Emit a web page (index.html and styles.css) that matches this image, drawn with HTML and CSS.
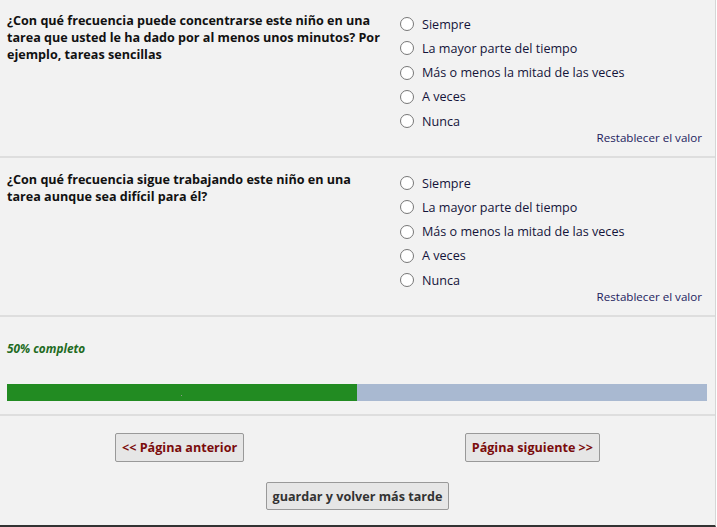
FILE: index.html
```html
<!DOCTYPE html>
<html lang="es">
<head>
  <meta charset="UTF-8" />
  <meta name="viewport" content="width=device-width, initial-scale=1.0"/>
  <title>Encuesta</title>
  <link rel="stylesheet" href="styles.css">
</head>
<body>
  <div class="page">
    <div class="question">
      <div class="q-text">¿Con qué frecuencia puede concentrarse este niño en una tarea que usted le ha dado por al menos unos minutos? Por ejemplo, tareas sencillas</div>
      <div class="q-answers">
        <label class="opt"><span class="radio"></span>Siempre</label>
        <label class="opt"><span class="radio"></span>La mayor parte del tiempo</label>
        <label class="opt"><span class="radio"></span>Más o menos la mitad de las veces</label>
        <label class="opt"><span class="radio"></span>A veces</label>
        <label class="opt"><span class="radio"></span>Nunca</label>
        <div class="reset">Restablecer el valor</div>
      </div>
    </div>

    <div class="question">
      <div class="q-text">¿Con qué frecuencia sigue trabajando este niño en una tarea aunque sea difícil para él?</div>
      <div class="q-answers">
        <label class="opt"><span class="radio"></span>Siempre</label>
        <label class="opt"><span class="radio"></span>La mayor parte del tiempo</label>
        <label class="opt"><span class="radio"></span>Más o menos la mitad de las veces</label>
        <label class="opt"><span class="radio"></span>A veces</label>
        <label class="opt"><span class="radio"></span>Nunca</label>
        <div class="reset">Restablecer el valor</div>
      </div>
    </div>

    <div class="progress">
      <div class="progress-label">50% completo</div>
      <div class="bar">
        <div class="bar-fill" style="width: 50%"><span class="dot"></span></div>
      </div>
    </div>

    <div class="nav">
      <div class="nav-row">
        <button class="btn btn-nav">&lt;&lt; Página anterior</button>
        <button class="btn btn-nav">Página siguiente &gt;&gt;</button>
      </div>
      <div class="nav-save">
        <button class="btn btn-save">guardar y volver más tarde</button>
      </div>
    </div>
  </div>
</body>
</html>
```

FILE: styles.css
```css
body {
  margin: 0;
  background: #fff;
  font-family: "Open Sans", "Noto Sans", sans-serif;
  font-size: 12.6px;
  color: #111;
}
.page {
  width: 715px;
  height: 526px;
  margin-top: -1px;
  background: #f2f2f2;
  border-right: 1px solid #d6d6d6;
  border-bottom: 2px solid #333;
  overflow: hidden;
}
.question {
  display: flex;
  padding: 13px 0 0 7px;
  height: 144px;
  border-bottom: 2px solid #dedede;
}
.q-text {
  width: 376px;
  font-weight: bold;
  line-height: 17px;
  color: #111;
}
.q-answers {
  flex: 1;
  padding: 2px 13px 0 17px;
}
.opt {
  display: flex;
  align-items: center;
  height: 20px;
  margin-bottom: 4.25px;
  color: #14143a;
}
.radio {
  width: 12px;
  height: 12px;
  border: 1px solid #777;
  border-radius: 50%;
  background: #fff;
  margin-right: 8px;
}
.reset {
  margin-top: -3px;
  text-align: right;
  font-size: 11.6px;
  line-height: 12px;
  color: #22225e;
}
.progress {
  padding: 23px 8px 0 7px;
  height: 74px;
  border-bottom: 2px solid #dedede;
}
.progress-label {
  font-style: italic;
  font-weight: bold;
  font-size: 11.8px;
  color: #226b22;
  line-height: 16px;
}
.bar {
  margin-top: 28px;
  height: 17px;
  background: #a9b9d1;
}
.bar-fill {
  position: relative;
  height: 100%;
  background: #228b22;
}
.dot {
  position: absolute;
  left: 174px;
  top: 11px;
  width: 1px;
  height: 1px;
  background: #8a9a8a;
}
.nav {
  padding-top: 17px;
}
.nav-row {
  display: flex;
  justify-content: space-between;
  padding: 0 115px;
}
.nav-save {
  display: flex;
  justify-content: center;
  margin-top: 20px;
}
.btn {
  font-family: "Open Sans", "Noto Sans", sans-serif;
  font-size: 12.6px;
  font-weight: bold;
  background: #e6e6e6;
  border: 1px solid #999;
  border-radius: 2px;
  height: 29px;
  padding: 0 6px;
  cursor: pointer;
}
.btn-nav {
  color: #7a0c0c;
}
.btn-save {
  color: #333;
  height: 28px;
}
```
